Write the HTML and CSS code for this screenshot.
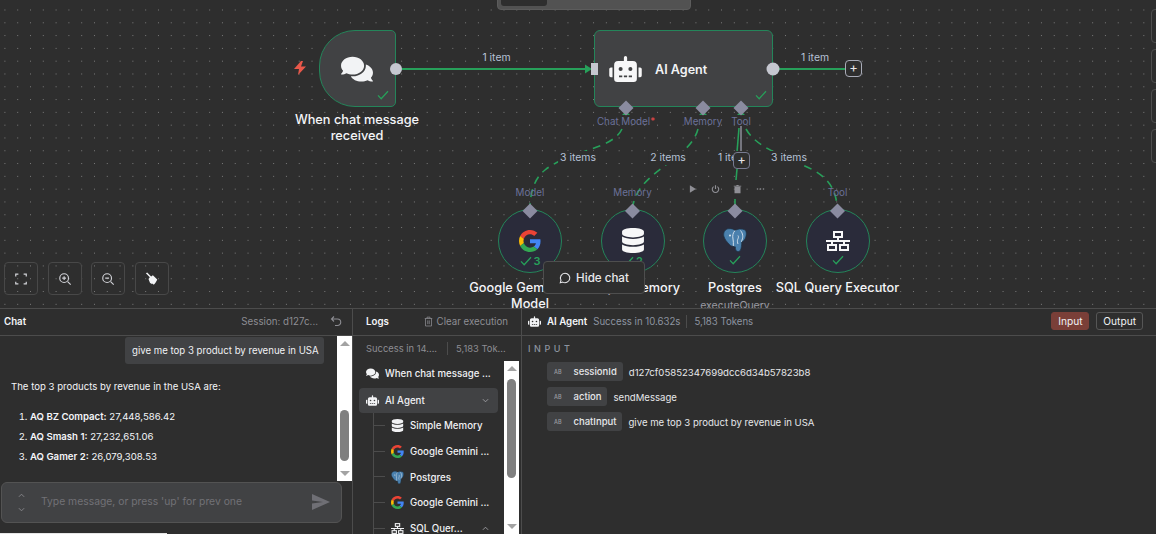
FILE: index.html
```html
<!DOCTYPE html>
<html lang="en">
<head>
<meta charset="utf-8">
<title>AI Agent workflow</title>
<link rel="stylesheet" href="styles.css">
</head>
<body>
<svg class="defs" width="0" height="0">
  <symbol id="i-comments" viewBox="0 0 576 512"><path fill="currentColor" d="M416 192c0-88.4-93.1-160-208-160S0 103.6 0 192c0 34.3 14.1 65.9 38 92-13.4 30.2-35.5 54.2-35.8 54.5-2.2 2.3-2.8 5.7-1.5 8.7S4.8 352 8 352c36.6 0 66.9-12.3 88.7-25 32.2 15.7 70.3 25 111.3 25 114.9 0 208-71.6 208-160zm122 220c23.9-26 38-57.7 38-92 0-66.9-53.5-124.2-129.3-148.1.9 6.6 1.3 13.3 1.3 20.1 0 105.9-107.7 192-240 192-10.8 0-21.3-.8-31.7-1.9C207.8 439.6 281.8 480 368 480c41 0 79.1-9.2 111.3-25 21.8 12.7 52.1 25 88.7 25 3.2 0 6.1-1.9 7.3-4.8 1.3-2.9.7-6.3-1.5-8.7-.3-.3-22.4-24.2-35.8-54.5z"/></symbol>
  <symbol id="i-robot" viewBox="0 0 640 512"><path fill="currentColor" d="M32,224H64V416H32A31.96166,31.96166,0,0,1,0,384V256A31.96166,31.96166,0,0,1,32,224Zm512-48V448a64.06328,64.06328,0,0,1-64,64H160a64.06328,64.06328,0,0,1-64-64V176a79.974,79.974,0,0,1,80-80H288V32a32,32,0,0,1,64,0V96H464A79.974,79.974,0,0,1,544,176ZM264,256a40,40,0,1,0-40,40A39.997,39.997,0,0,0,264,256Zm-8,128H192v32h64Zm96,0H288v32h64ZM456,256a40,40,0,1,0-40,40A39.997,39.997,0,0,0,456,256Zm-8,128H384v32h64ZM640,256V384a31.96166,31.96166,0,0,1-32,32H576V224h32A31.96166,31.96166,0,0,1,640,256Z"/></symbol>
  <symbol id="i-db" viewBox="0 0 448 512"><path fill="currentColor" d="M448 73.143v45.714C448 159.143 347.667 192 224 192S0 159.143 0 118.857V73.143C0 32.857 100.333 0 224 0s224 32.857 224 73.143zM448 176v102.857C448 319.143 347.667 352 224 352S0 319.143 0 278.857V176c48.125 33.143 136.208 48.572 224 48.572S399.874 209.143 448 176zm0 160v102.857C448 479.143 347.667 512 224 512S0 479.143 0 438.857V336c48.125 33.143 136.208 48.572 224 48.572S399.874 369.143 448 336z"/></symbol>
  <symbol id="i-google" viewBox="0 0 48 48">
    <path fill="#EA4335" d="M24 9.5c3.54 0 6.71 1.22 9.21 3.6l6.85-6.85C35.9 2.38 30.47 0 24 0 14.62 0 6.51 5.38 2.56 13.22l7.98 6.19C12.43 13.72 17.74 9.5 24 9.5z"/>
    <path fill="#4285F4" d="M46.98 24.55c0-1.57-.15-3.09-.38-4.55H24v9.02h12.94c-.58 2.96-2.26 5.48-4.78 7.18l7.73 6c4.51-4.18 7.09-10.36 7.09-17.65z"/>
    <path fill="#FBBC05" d="M10.53 28.59c-.48-1.45-.76-2.99-.76-4.59s.27-3.14.76-4.59l-7.98-6.19C.92 16.46 0 20.12 0 24c0 3.88.92 7.54 2.56 10.78l7.97-6.19z"/>
    <path fill="#34A853" d="M24 48c6.48 0 11.93-2.13 15.89-5.81l-7.73-6c-2.15 1.45-4.92 2.3-8.16 2.3-6.26 0-11.57-4.22-13.47-9.91l-7.98 6.19C6.51 42.62 14.62 48 24 48z"/>
  </symbol>
  <symbol id="i-pg" viewBox="0 0 24 24">
    <path fill="#4a80ad" stroke="#1d3347" stroke-width=".7" d="M5 .8C9 .2 11 1.500 12 2.500 14 1 19 .2 22 2 24 4 23.500 8 22 11 21 12.500 20 13.500 18.800 14 18.500 17 18.500 20 17.500 22 16.500 24 14 24 13 22.500 12.300 21 12.500 20 12.300 18.800 11 19 10.500 18.500 10.300 18 8.500 18.500 7 17.500 6 16 4 14 1.500 11 .8 8 .2 4.500 2 1.500 5 .8z"/>
    <path fill="none" stroke="#dce6ef" stroke-width=".9" d="M12 2.500C9.800 5 9.300 8 10 11 10.400 13 10.500 15.500 10.300 18M17.500 2.500C20 5.500 20.300 9 19 12 18.600 13 18.300 13.600 18.800 14M15 7.500C15.800 8.600 15.400 10 14.700 11.400 14.200 12.600 14.400 14.800 15 16"/>
    <circle cx="7" cy="7.500" r="1" fill="#dce6ef"/>
  </symbol>
  <symbol id="i-net" viewBox="0 0 24 20">
    <g fill="none" stroke="currentColor" stroke-width="2">
      <rect x="8" y="1" width="8" height="5"/><rect x="2" y="14" width="8" height="5"/><rect x="14" y="14" width="8" height="5"/>
      <path d="M12 6V10M6 14V10H18V14M0 10H24"/>
    </g>
  </symbol>
  <symbol id="i-check" viewBox="0 0 14 12"><path fill="none" stroke="currentColor" stroke-width="1.500" d="M1 6.500 4.800 10.500 13 1.500"/></symbol>
  <symbol id="i-trash" viewBox="0 0 12 14"><path fill="none" stroke="currentColor" stroke-width="1" d="M1 3H11M4 3V1.200H8V3M2 3V13H10V3M5 5.500V10.500M7 5.500V10.500"/></symbol>
</svg>

<main class="app">
  <section class="canvas">
    <svg class="edges" width="1156" height="308" viewBox="0 0 1156 308">
      <g class="solid">
        <path d="M402 69H588"/>
        <path d="M778 69H845"/>
      </g>
      <polygon class="arrow" points="585,64.500 592,69 585,73.500"/>
      <g class="dashed">
        <path d="M622 129C612 150 570 150 545 170C535 178 531 190 530 205"/>
        <path d="M698 129C690 160 640 170 633 205"/>
        <path d="M746 129C755 145 775 152 790 160C810 168 834 175 837 205"/>
      </g>
      <path class="green-short" d="M737 169 736 180"/>
      <path class="green-short" d="M735 199V205"/>
      <path class="green-short" d="M739 128 737 152"/>
      <path class="gray-line" d="M741 126V152"/>
    </svg>

    <div class="topbar"><span class="topbar-tab"></span></div>

    <div class="side-tabs">
      <span class="side-tab"></span><span class="side-tab"></span><span class="side-tab"></span><span class="side-tab"></span>
    </div>

    <div class="node trigger">
      <svg class="icon-comments"><use href="#i-comments"/></svg>
      <svg class="check check-trigger"><use href="#i-check"/></svg>
    </div>
    <svg class="bolt" viewBox="0 0 12 14"><path fill="#e8584a" d="M7 0 0 8H5L4 14 12 5.500H7L9 0z"/></svg>
    <div class="node-label label-trigger">When chat message received</div>

    <div class="node agent">
      <svg class="icon-robot"><use href="#i-robot"/></svg>
      <span class="agent-name">AI Agent</span>
      <svg class="check check-agent"><use href="#i-check"/></svg>
    </div>

    <div class="circle c-google">
      <svg class="icon-g"><use href="#i-google"/></svg>
      <span class="count"><svg class="check-inline"><use href="#i-check"/></svg>3</span>
    </div>
    <div class="circle c-memory">
      <svg class="icon-db"><use href="#i-db"/></svg>
      <span class="count"><svg class="check-inline"><use href="#i-check"/></svg>2</span>
    </div>
    <div class="circle c-pg">
      <svg class="icon-pg"><use href="#i-pg"/></svg>
      <span class="count"><svg class="check-inline"><use href="#i-check"/></svg></span>
    </div>
    <div class="circle c-sql">
      <svg class="icon-net"><use href="#i-net"/></svg>
      <span class="count"><svg class="check-inline"><use href="#i-check"/></svg></span>
    </div>

    <svg class="ports" width="1156" height="308" viewBox="0 0 1156 308">
      <g class="stubs">
        <polygon points="622,115 630,115 626,111"/><polygon points="699,115 707,115 703,111"/><polygon points="737,115 745,115 741,111"/>
      </g>
      <circle class="dot" cx="396" cy="69" r="6"/>
      <circle class="dot" cx="773" cy="69" r="6.500"/>
      <rect class="dot" x="591" y="63" width="7" height="12"/>
      <g class="diamonds">
        <polygon points="626,100.500 633.500,108 626,115.500 618.500,108"/>
        <polygon points="703,100.500 710.500,108 703,115.500 695.500,108"/>
        <polygon points="741,100.500 748.500,108 741,115.500 733.500,108"/>
        <polygon points="530,203.500 537.500,211 530,218.500 522.500,211"/>
        <polygon points="632.500,203.500 640,211 632.500,218.500 625,211"/>
        <polygon points="735,203.500 742.500,211 735,218.500 727.500,211"/>
        <polygon points="837.500,203.500 845,211 837.500,218.500 830,211"/>
      </g>
    </svg>

    <span class="edge-label el-a">1 item</span>
    <span class="edge-label el-b">1 item</span>
    <span class="edge-label edge-masked el-c">3 items</span>
    <span class="edge-label edge-masked el-d">2 items</span>
    <span class="edge-label edge-masked el-e">1 item</span>
    <span class="edge-label edge-masked el-f">3 items</span>

    <span class="port-label pl-chat">Chat Model<i class="req">*</i></span>
    <span class="port-label pl-mem">Memory</span>
    <span class="port-label pl-tool">Tool</span>
    <span class="port-label pl-model2">Model</span>
    <span class="port-label pl-mem2">Memory</span>
    <span class="port-label pl-tool2">Tool</span>

    <span class="plus plus-out">+</span>
    <span class="plus plus-tool">+</span>

    <div class="node-toolbar">
      <svg class="tb-icon" viewBox="0 0 12 12"><path fill="currentColor" d="M2.500 1 10.500 6 2.500 11z"/></svg>
      <svg class="tb-icon" viewBox="0 0 12 12"><path fill="none" stroke="currentColor" stroke-width="1.500" d="M3.500 2.800a4.300 4.300 0 1 0 5 0M6 1V6"/></svg>
      <svg class="tb-icon" viewBox="0 0 12 12"><path fill="currentColor" d="M2 3H10V11.500H2zM1 1.500H4.500V.5H7.500V1.500H11V2.500H1z"/></svg>
      <svg class="tb-icon" viewBox="0 0 12 12"><g fill="currentColor"><circle cx="2" cy="6" r="1.100"/><circle cx="6" cy="6" r="1.100"/><circle cx="10" cy="6" r="1.100"/></g></svg>
    </div>

    <div class="node-label label-google">Google Gemini Chat Model</div>
    <div class="node-label label-memory">Simple Memory</div>
    <div class="node-label label-pg">Postgres<span class="node-sub">executeQuery</span></div>
    <div class="node-label label-sql">SQL Query Executor</div>

    <div class="controls">
      <span class="ctl"><svg class="ctl-icon" viewBox="0 0 16 16"><path fill="none" stroke="currentColor" stroke-width="1.400" d="M2 5V2.500H5M11 2.500H14V5M14 11V13.500H11M5 13.500H2V11"/></svg></span>
      <span class="ctl"><svg class="ctl-icon" viewBox="0 0 16 16"><g fill="none" stroke="currentColor" stroke-width="1.300"><circle cx="7" cy="7" r="5"/><path d="M11 11 14.500 14.500M4.800 7H9.200M7 4.800V9.200"/></g></svg></span>
      <span class="ctl"><svg class="ctl-icon" viewBox="0 0 16 16"><g fill="none" stroke="currentColor" stroke-width="1.300"><circle cx="7" cy="7" r="5"/><path d="M11 11 14.500 14.500M4.800 7H9.200"/></g></svg></span>
      <span class="ctl"><svg class="ctl-icon" viewBox="0 0 16 16"><path fill="#f2f3f5" d="M1 1.500 2.500 .5 7 5 9 3.800 14 8.500C13 11 11.500 13 10 14.500L8.500 13 8 14 6.500 12.500 6 13 4 8 5.500 6z"/></svg></span>
    </div>

    <button class="hide-chat"><svg class="hide-icon" viewBox="0 0 14 14"><path fill="none" stroke="currentColor" stroke-width="1.200" d="M7 1.500a5.500 5.500 0 1 1-2.600 10.300L1.500 12.500l.8-2.900A5.500 5.500 0 0 1 7 1.500z"/></svg>Hide chat</button>
  </section>

  <section class="panel">
    <div class="chat">
      <header class="chat-head">
        <span class="head-title">Chat</span>
        <span class="session">Session: d127c...</span>
        <svg class="undo" viewBox="0 0 12 12"><path fill="none" stroke="currentColor" stroke-width="1.100" d="M4 1.500 1.500 4 4 6.500M1.500 4H7.500a3 3 0 0 1 0 6.500H5"/></svg>
      </header>
      <div class="chat-body">
        <div class="messages">
          <div class="bubble">give me top 3 product by revenue in USA</div>
          <p class="reply">The top 3 products by revenue in the USA are:</p>
          <ol class="answers">
            <li><b>AQ BZ Compact:</b> 27,448,586.42</li>
            <li><b>AQ Smash 1:</b> 27,232,651.06</li>
            <li><b>AQ Gamer 2:</b> 26,079,308.53</li>
          </ol>
        </div>
        <div class="scrollbar chat-scroll">
          <span class="arrow-up"></span>
          <span class="thumb"></span>
          <span class="arrow-down"></span>
        </div>
      </div>
      <div class="chat-input">
        <span class="updown">
          <svg class="chev" viewBox="0 0 8 5"><path fill="none" stroke="currentColor" d="M1 4 4 1 7 4"/></svg>
          <svg class="chev" viewBox="0 0 8 5"><path fill="none" stroke="currentColor" d="M1 1 4 4 7 1"/></svg>
        </span>
        <span class="placeholder">Type message, or press 'up' for prev one</span>
        <svg class="send" viewBox="0 0 18 16"><path fill="currentColor" d="M0 0 18 8 0 16 0 9.600 11 8 0 6.400z"/></svg>
      </div>
      <div class="h-scroll"></div>
    </div>

    <div class="logs">
      <header class="logs-head">
        <span class="head-title">Logs</span>
        <span class="clear"><svg class="clear-icon"><use href="#i-trash"/></svg>Clear execution</span>
      </header>
      <div class="logs-summary"><span>Success in 14....</span><i class="vsep"></i><span>5,183 Tok...</span></div>
      <div class="logs-body">
        <ul class="tree">
          <li class="row top"><svg class="row-icon"><use href="#i-comments"/></svg><span>When chat message ...</span></li>
          <li class="row top selected"><svg class="row-icon"><use href="#i-robot"/></svg><span>AI Agent</span><svg class="row-chev" viewBox="0 0 8 5"><path fill="none" stroke="currentColor" d="M1 1 4 4 7 1"/></svg></li>
          <li class="row child"><svg class="row-icon"><use href="#i-db"/></svg><span>Simple Memory</span></li>
          <li class="row child"><svg class="row-icon"><use href="#i-google"/></svg><span>Google Gemini ...</span></li>
          <li class="row child"><svg class="row-icon"><use href="#i-pg"/></svg><span>Postgres</span></li>
          <li class="row child"><svg class="row-icon"><use href="#i-google"/></svg><span>Google Gemini ...</span></li>
          <li class="row child"><svg class="row-icon"><use href="#i-net"/></svg><span>SQL Quer...</span><svg class="row-chev" viewBox="0 0 8 5"><path fill="none" stroke="currentColor" d="M1 4 4 1 7 4"/></svg></li>
        </ul>
        <div class="scrollbar logs-scroll">
          <span class="arrow-up"></span>
          <span class="thumb"></span>
          <span class="arrow-down"></span>
        </div>
      </div>
    </div>

    <div class="details">
      <header class="details-head">
        <svg class="details-icon"><use href="#i-robot"/></svg>
        <span class="head-title">AI Agent</span>
        <span class="muted">Success in 10.632s</span>
        <i class="vsep"></i>
        <span class="muted">5,183 Tokens</span>
        <span class="toggle">
          <button class="btn btn-active">Input</button>
          <button class="btn">Output</button>
        </span>
      </header>
      <div class="details-body">
        <h2 class="section">INPUT</h2>
        <div class="field"><span class="pill"><i class="ab">AB</i>sessionId</span><span class="val">d127cf05852347699dcc6d34b57823b8</span></div>
        <div class="field"><span class="pill"><i class="ab">AB</i>action</span><span class="val">sendMessage</span></div>
        <div class="field"><span class="pill"><i class="ab">AB</i>chatInput</span><span class="val">give me top 3 product by revenue in USA</span></div>
      </div>
    </div>
  </section>
</main>
</body>
</html>
```

FILE: styles.css
```css
* { box-sizing: border-box; }
html, body { margin: 0; padding: 0; height: 100%; overflow: hidden; }
body { font-family: Inter, "Liberation Sans", sans-serif; background: #2e2e2e; color: #f2f3f5; }
.defs { position: absolute; }
.app { display: flex; flex-direction: column; width: 1156px; height: 534px; }
svg { display: block; }

/* Canvas */
.canvas {
  position: relative; height: 308px; flex: none; overflow: hidden;
  background-color: #2e2e2e;
  background-image: radial-gradient(circle at center, #7c7c7c 0, #7c7c7c .6px, transparent .9px);
  background-size: 12.8px 12.8px;
  background-position: -1.5px 3.6px;
}
.edges, .ports { position: absolute; left: 0; top: 0; }
.edges path { fill: none; }
.solid path { stroke: #27a05a; stroke-width: 2; }
.arrow { fill: #27a05a; }
.dashed path { stroke: #27a05a; stroke-width: 1.600; stroke-dasharray: 8 6; }
.green-short { stroke: #27a05a; stroke-width: 1.600; }
.gray-line { stroke: #8d8e9a; stroke-width: 1.500; }
.dot { fill: #c5c7d0; }
.diamonds polygon { fill: #8a8ba0; }
.stubs polygon { fill: #27a05a; }

.topbar {
  position: absolute; left: 497px; top: -4px; width: 194px; height: 14px;
  background: #525252; border: 1px solid #5c5c5c; border-radius: 4px; padding-left: 3px;
}
.topbar-tab { display: block; width: 46px; height: 9px; background: #2e2e2e; border-radius: 3px; }
.side-tabs { position: absolute; left: 1151px; top: 9px; display: flex; flex-direction: column; gap: 6px; }
.side-tab { display: block; width: 34px; height: 34px; border: 1px solid #4e4e4e; border-radius: 4px; }

.node { position: absolute; background: #414244; border: 1.500px solid #24855a; }
.trigger { left: 319px; top: 30px; width: 77px; height: 77px; border-radius: 36px 5px 5px 36px; }
.agent { left: 594px; top: 30px; width: 179px; height: 77px; border-radius: 6px; }
.icon-comments { position: absolute; left: 20.500px; top: 23.700px; width: 32px; height: 28.400px; color: #f2f3f5; }
.icon-robot { position: absolute; left: 14px; top: 25px; width: 33px; height: 26px; color: #f7f7f8; }
.agent-name { position: absolute; left: 60px; top: 31px; font-size: 12.600px; font-weight: 600; line-height: 16px; }
.check { position: absolute; width: 12px; height: 10px; color: #27a05a; }
.check-trigger { right: 6px; bottom: 6px; }
.check-agent { right: 5px; bottom: 6px; }
.bolt { position: absolute; left: 293.500px; top: 61px; width: 12px; height: 14px; }

.circle { position: absolute; top: 209px; width: 64px; height: 64px; border-radius: 50%; background: #2a2b3a; border: 1.500px solid #24855a; }
.c-google { left: 498px; }
.c-memory { left: 600.500px; }
.c-pg { left: 703px; }
.c-sql { left: 805.500px; }
.icon-g { position: absolute; left: 20px; top: 20px; width: 22px; height: 22px; }
.icon-db { position: absolute; left: 20.500px; top: 18px; width: 22px; height: 25px; color: #f7f7f8; }
.icon-pg { position: absolute; left: 18.500px; top: 17.500px; width: 24px; height: 24px; }
.icon-net { position: absolute; left: 19.500px; top: 21px; width: 24px; height: 20px; color: #f7f7f8; }
.count { position: absolute; left: 0; right: 0; top: 45px; display: flex; justify-content: center; align-items: center; gap: 2px; color: #27a05a; font-size: 11px; font-weight: 600; line-height: 12px; }
.check-inline { width: 12px; height: 10px; }

.node-label { position: absolute; width: 170px; text-align: center; font-size: 12.750px; font-weight: 500; line-height: 16px; color: #f4f5f8; }
.label-trigger { left: 272px; top: 112px; width: 170px; }
.label-google { left: 465px; top: 280px; width: 130px; }
.label-memory { left: 547.500px; top: 280px; }
.label-pg { left: 650px; top: 280px; }
.label-sql { left: 752.500px; top: 280px; }
.node-sub { display: block; font-size: 10.500px; font-weight: 400; color: #9a9aa2; margin-top: 2px; }

.edge-label { position: absolute; font-size: 10.400px; line-height: 14px; color: #b6c2d6; white-space: nowrap; transform: translateX(-50%); }
.edge-masked { background: #2e2e2e; padding: 0 2px; }
.el-a { left: 496.500px; top: 51px; }
.el-b { left: 815px; top: 51px; }
.el-c { left: 578px; top: 151px; }
.el-d { left: 668px; top: 151px; }
.el-e { left: 732px; top: 151px; }
.el-f { left: 789px; top: 151px; }

.port-label { position: absolute; font-size: 9.800px; line-height: 12px; color: #6b7199; white-space: nowrap; transform: translateX(-50%); }
.req { color: #e8484a; font-style: normal; }
.pl-chat { left: 626px; top: 116px; }
.pl-mem { left: 703px; top: 116px; }
.pl-tool { left: 741px; top: 116px; }
.pl-model2 { left: 530px; top: 187px; }
.pl-mem2 { left: 632.500px; top: 187px; }
.pl-tool2 { left: 837.500px; top: 187px; }

.plus {
  position: absolute; width: 17px; height: 17px; border: 1.500px solid #a9acb8; border-radius: 4px;
  background: #2e2e2e; color: #e5e6ea; font-size: 13px; line-height: 13px; text-align: center;
}
.plus-out { left: 845px; top: 60px; }
.plus-tool { left: 733px; top: 152px; border-color: #777a90; }

.node-toolbar { position: absolute; left: 688px; top: 184px; display: flex; gap: 13.500px; color: #8f8f95; }
.tb-icon { width: 9px; height: 10px; }

.controls { position: absolute; left: 4px; top: 262px; display: flex; gap: 9.500px; }
.ctl { display: flex; align-items: center; justify-content: center; width: 34px; height: 33px; border: 1px solid #484848; border-radius: 4px; color: #d2d3d8; }
.ctl-icon { width: 14px; height: 14px; }

.hide-chat {
  position: absolute; left: 543px; top: 261px; width: 102px; height: 33px;
  display: flex; align-items: center; justify-content: center; gap: 5px;
  background: #2e2e2e; border: 1px solid #4e4e4e; border-radius: 4px;
  color: #e9e9ec; font-family: inherit; font-size: 11.600px; font-weight: 500; padding: 0;
}
.hide-icon { width: 12px; height: 12px; }

/* Panel */
.panel { flex: 1; display: flex; min-height: 0; border-top: 1px solid #4c4c4c; background: #2e2e2e; }
.head-title { font-size: 9.700px; font-weight: 600; color: #f4f5f8; }
.chat { width: 353px; flex: none; display: flex; flex-direction: column; border-right: 1px solid #4c4c4c; }
.chat-head { height: 27px; flex: none; display: flex; align-items: center; padding: 0 10px 2px 4px; border-bottom: 1px solid #4c4c4c; }
.session { margin-left: auto; font-size: 9.750px; color: #8d8d93; }
.undo { width: 12px; height: 12px; margin-left: 12px; color: #8d8d93; }
.chat-body { flex: none; height: 145px; display: flex; }
.messages { flex: 1; min-width: 0; overflow: hidden; padding-top: 1px; }
.bubble {
  margin: 0 13px 0 auto; width: 199px; height: 27px; background: #414244; border-radius: 3px;
  font-size: 9.630px; line-height: 27px; padding-left: 7px; color: #f0f1f4; white-space: nowrap;
}
.reply { margin: 17px 0 0 11px; font-size: 9.600px; line-height: 12px; color: #f4f5f8; }
.answers { margin: 18px 0 0; padding: 0 0 0 30px; font-size: 9.600px; line-height: 12px; color: #f4f5f8; display: flex; flex-direction: column; gap: 8px; }
.answers b { font-weight: 600; }

.scrollbar { position: relative; width: 15px; flex: none; background: #fff; display: flex; flex-direction: column; align-items: center; }
.thumb { display: block; width: 9px; background: #7f7f7f; border-radius: 5px; }
.arrow-up, .arrow-down { position: absolute; width: 0; height: 0; border-left: 5px solid transparent; border-right: 5px solid transparent; }
.arrow-up { top: 5px; border-bottom: 5px solid #a3a3a3; }
.arrow-down { bottom: 5px; border-top: 5px solid #a3a3a3; }
.chat-scroll .thumb { margin-top: 74px; height: 51px; }
.logs-scroll .thumb { margin-top: 18px; height: 99px; }

.chat-input {
  margin: 1px 0 0 1px; width: 341px; height: 41px; flex: none; display: flex; align-items: center;
  background: #414244; border: 1px solid #535353; border-radius: 6px; color: #7d7d83;
}
.updown { width: 38px; display: flex; flex-direction: column; align-items: center; gap: 9px; flex: none; }
.chev { width: 7px; height: 5px; color: #8b8b90; margin-left: 1px; }
.placeholder { font-size: 10.350px; color: #717176; white-space: nowrap; margin: 0 0 3px 1px; }
.send { width: 18px; height: 16px; margin: 0 11px 1px auto; color: #6f6f75; }
.h-scroll { margin-top: auto; width: 167px; height: 1.500px; background: #e6e6e6; }

/* Logs */
.logs { width: 169px; flex: none; display: flex; flex-direction: column; border-right: 1px solid #4c4c4c; }
.logs-head { height: 27px; flex: none; display: flex; align-items: center; justify-content: space-between; padding: 0 13px 2px 13px; border-bottom: 1px solid #4c4c4c; }
.clear { display: flex; align-items: center; gap: 4px; font-size: 9.700px; color: #8d8d93; }
.clear-icon { width: 9px; height: 11px; color: #8d8d93; }
.logs-summary { display: flex; align-items: center; height: 25px; flex: none; padding-left: 13px; font-size: 9.400px; color: #8d8d93; white-space: nowrap; }
.logs-summary .vsep { margin: 0 8px 0 10px; }
.vsep { display: block; width: 1px; height: 13px; background: #4c4c4c; flex: none; }
.logs-body { flex: 1; min-height: 0; display: flex; }
.tree { width: 151px; flex: none; overflow: hidden; list-style: none; margin: 0; padding: 0; position: relative; }
.tree::before { content: ""; position: absolute; left: 20px; top: 52px; bottom: 0; width: 1px; background: #4c4c4c; }
.row { display: flex; align-items: center; height: 25.600px; font-size: 9.700px; font-weight: 500; color: #f0f1f4; white-space: nowrap; position: relative; }
.row-icon { width: 13px; height: 13px; flex: none; color: #f2f3f5; }
.row.top { padding-left: 6px; margin-left: 6px; width: 139px; border-radius: 4px; }
.row.top .row-icon { margin-right: 6px; margin-left: 1px; }
.selected { background: #414244; margin-top: 1px; }
.row.child { padding-left: 38px; }
.row.child .row-icon { margin-right: 6px; }
.row.child::before { content: ""; position: absolute; left: 20px; top: 12px; width: 12px; height: 1px; background: #4c4c4c; }
.row-chev { width: 7px; height: 5px; margin-left: auto; margin-right: 9.500px; color: #a3a3a8; }
.row.child .row-chev { margin-right: 15px; }

/* Details */
.details { flex: 1; min-width: 0; display: flex; flex-direction: column; }
.details-head { height: 27px; flex: none; display: flex; align-items: center; padding: 0 0 2px 6px; border-bottom: 1px solid #4c4c4c; }
.details-icon { width: 13px; height: 11px; margin-right: 6px; color: #f2f3f5; }
.muted { font-size: 9.650px; color: #8d94a0; }
.details-head .head-title { margin-right: 6px; }
.details-head .vsep { margin: 0 7px 0 6px; }
.toggle { margin-left: auto; margin-right: 13px; display: flex; gap: 7px; }
.btn { height: 18px; padding: 0 6px; font-family: inherit; font-size: 10.200px; color: #f0f1f4; background: transparent; border: 1px solid #565656; border-radius: 3px; line-height: 14px; }
.btn-active { background: #7a3f38; border-color: #7a3f38; width: 38px; }
.details-body { padding: 7px 0 0 6px; display: flex; flex-direction: column; }
.section { margin: 0 0 7px; font-size: 9px; font-weight: 500; line-height: 12px; letter-spacing: 3.600px; color: #8d94a0; }
.field { display: flex; align-items: center; gap: 6px; margin: 0 0 6px 19px; height: 19px; }
.pill { display: flex; align-items: center; height: 19px; padding: 0 6px 0 7px; background: #414244; border-radius: 3px; font-size: 9.500px; font-weight: 500; color: #e6e7ea; }
.ab { font-style: normal; font-size: 5.500px; color: #9d9da3; margin-right: 12px; }
.val { font-size: 9.600px; color: #e6e7ea; white-space: nowrap; margin-top: 2px; }
```
